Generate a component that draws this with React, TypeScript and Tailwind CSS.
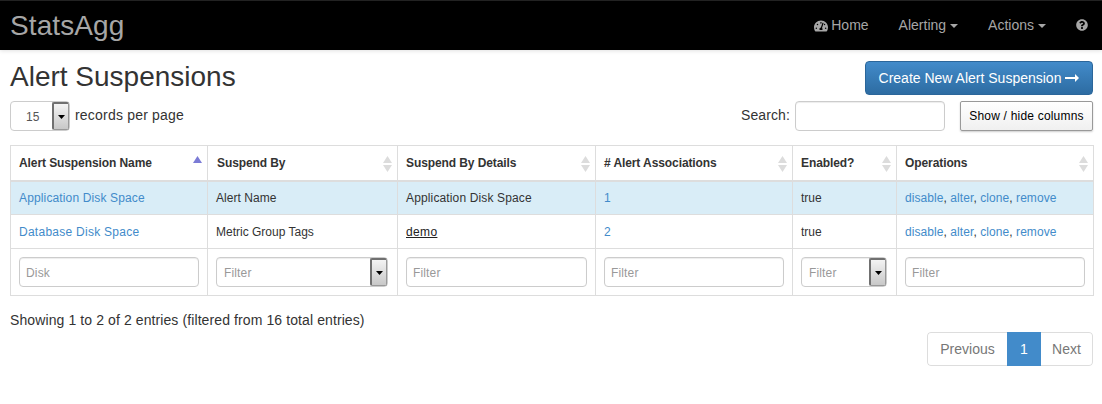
import React from "react";
import { FaTachometerAlt, FaQuestionCircle } from "react-icons/fa";

const FONT = "font-['Liberation_Sans',Arial,sans-serif]";

function Arrow() {
  return (
    <span className="flex h-full w-[17px] shrink-0 items-center justify-center rounded-[2px] border border-l-2 border-t-2 border-[#707070] border-b-[#999] border-r-[#999] bg-gradient-to-b from-[#f4f4f4] to-[#c8c8c8]">
      <svg width="7" height="4" viewBox="0 0 7 4"><path d="M0 0h7L3.5 4z" fill="#000" /></svg>
    </span>
  );
}

function Sort({ active = false }: { active?: boolean }) {
  if (active) {
    return (
      <svg className="absolute right-[5px] top-[10px]" width="9" height="7" viewBox="0 0 9 7">
        <path d="M4.5 0L9 7H0z" fill="#7b7bd6" />
      </svg>
    );
  }
  return (
    <svg className="absolute right-[5px] top-[10px]" width="9" height="16" viewBox="0 0 9 16">
      <path d="M4.5 0L9 7H0z" fill="#dcdcdc" />
      <path d="M0 9h9l-4.5 7z" fill="#dcdcdc" />
    </svg>
  );
}

function TextFilter({ value, w }: { value: string; w: string }) {
  return (
    <div className={`flex h-[30px] ${w} items-center rounded-[4px] border border-[#ccc] bg-white px-[6px] pt-[1px] text-[12px] tracking-[0.15px] text-[#999] shadow-[inset_0_1px_1px_rgba(0,0,0,0.075)]`}>
      {value}
    </div>
  );
}

function SelectFilter({ w }: { w: string }) {
  return (
    <div className={`flex h-[30px] ${w} items-center justify-between rounded-[4px] border border-[#ccc] bg-white pl-[7px] text-[12px] tracking-[0.15px] text-[#999] shadow-[inset_0_1px_1px_rgba(0,0,0,0.075)]`}>
      <span className="pt-[1px]">Filter</span>
      <Arrow />
    </div>
  );
}

const L = ({ children }: { children: React.ReactNode }) => <a className="text-[#428bca]">{children}</a>;

function Ops() {
  return (
    <span className="tracking-[0.07px]">
      <L>disable</L>, <L>alter</L>, <L>clone</L>, <L>remove</L>
    </span>
  );
}

const headers = ["Alert Suspension Name", "Suspend By", "Suspend By Details", "# Alert Associations", "Enabled?", "Operations"];
const widths = ["w-[197px]", "w-[190px]", "w-[198px]", "w-[197px]", "w-[104px]", "w-[197px]"];
const th = "relative h-[35px] border border-b-2 border-[#ddd] pl-[8px] text-left align-middle font-bold tracking-[-0.09px]";
const td = "h-[34px] border border-[#ddd] pl-[8px] align-middle";
const tf = "h-[47px] border border-[#ddd] pl-[8px] align-middle";

export default function App() {
  return (
    <div className={`${FONT} relative h-[404px] w-[1102px] overflow-hidden bg-white text-[14px] text-[#333]`}>
      <nav className="flex h-[50px] items-center justify-between border-t border-[#222] bg-black pl-[10px] pr-[14px] shadow-[0_1px_4px_rgba(0,0,0,0.12)]">
        <span className="text-[28px] leading-[48px] tracking-[0.1px] text-[#a6a6a6]">StatsAgg</span>
        <div className="flex items-center text-[14px] text-[#a6a6a6]">
          <span className="flex items-center gap-[3px]">
            <FaTachometerAlt className="text-[14px]" />
            Home
          </span>
          <span className="ml-[30px] flex items-center gap-[4px]">
            Alerting
            <svg width="8" height="4" viewBox="0 0 8 4"><path d="M0 0h8L4 4z" fill="#a6a6a6" /></svg>
          </span>
          <span className="ml-[30px] flex items-center gap-[4px]">
            Actions
            <svg width="8" height="4" viewBox="0 0 8 4"><path d="M0 0h8L4 4z" fill="#a6a6a6" /></svg>
          </span>
          <FaQuestionCircle className="mb-[2px] ml-[30px] text-[12px]" />
        </div>
      </nav>

      <main className="pl-[10px] pr-[9px]">
        <div className="flex h-[51px] items-start justify-between">
          <h1 className="mt-[10px] text-[28px] font-normal leading-[34px]">Alert Suspensions</h1>
          <button className="mt-[11px] flex h-[34px] w-[228px] items-center justify-center rounded-[4px] border border-[#2b669a] bg-gradient-to-b from-[#428bca] to-[#2d6ca2] text-[14px] text-white">
            Create New Alert Suspension
            <svg className="ml-[4px]" width="14" height="8" viewBox="0 0 14 8"><path d="M0 3h10V0l4 4-4 4V5H0z" fill="#fff" /></svg>
          </button>
        </div>

        <div className="flex h-[44px] items-start justify-between">
          <div className="flex items-center">
            <div className="flex h-[30px] w-[60px] items-center justify-between rounded-[4px] border border-[#ccc] bg-white pl-[15px] text-[12px] text-[#555]">
              <span className="pt-[1px]">15</span>
              <Arrow />
            </div>
            <span className="ml-[5px] pb-[2px] tracking-[0.2px]">records per page</span>
          </div>
          <div className="flex items-center">
            <span className="pb-[2px] tracking-[0.1px]">Search:</span>
            <div className="ml-[5px] h-[30px] w-[150px] rounded-[4px] border border-[#ccc] bg-white shadow-[inset_0_1px_1px_rgba(0,0,0,0.075)]" />
            <button className="ml-[15px] flex h-[30px] w-[133px] items-center justify-center rounded-[2px] border border-[#999] bg-gradient-to-b from-white to-[#f0f0f0] text-[12px] tracking-[0.2px] text-black shadow-[0_1px_2px_rgba(0,0,0,0.2)]">
              Show / hide columns
            </button>
          </div>
        </div>

        <table className="w-[1084px] table-fixed border-collapse text-[12px]">
          <colgroup>
            {widths.map((w, i) => <col key={i} className={w} />)}
          </colgroup>
          <thead>
            <tr>
              {headers.map((h, i) => (
                <th key={h} className={i === 1 ? `${th} !pl-[9px]` : th}>
                  {h}
                  <Sort active={i === 0} />
                </th>
              ))}
            </tr>
          </thead>
          <tbody>
            <tr className="bg-[#d9edf7]">
              <td className={td}><span className="tracking-[0.14px]"><L>Application Disk Space</L></span></td>
              <td className={td}><span className="tracking-[0.05px]">Alert Name</span></td>
              <td className={td}><span className="tracking-[0.14px]">Application Disk Space</span></td>
              <td className={td}><L>1</L></td>
              <td className={td}>true</td>
              <td className={td}><Ops /></td>
            </tr>
            <tr>
              <td className={td}><span className="tracking-[0.26px]"><L>Database Disk Space</L></span></td>
              <td className={td}>Metric Group Tags</td>
              <td className={td}><span className="tracking-[0.35px] text-[#222] underline">demo</span></td>
              <td className={td}><L>2</L></td>
              <td className={td}>true</td>
              <td className={td}><Ops /></td>
            </tr>
            <tr>
              <td className={tf}><TextFilter value="Disk" w="w-[180px]" /></td>
              <td className={tf}><SelectFilter w="w-[172px]" /></td>
              <td className={tf}><TextFilter value="Filter" w="w-[181px]" /></td>
              <td className={tf}><TextFilter value="Filter" w="w-[180px]" /></td>
              <td className={tf}><SelectFilter w="w-[86px]" /></td>
              <td className={tf}><TextFilter value="Filter" w="w-[180px]" /></td>
            </tr>
          </tbody>
        </table>

        <div className="mt-[14px] text-[14px] leading-[20px] tracking-[0.1px]">Showing 1 to 2 of 2 entries (filtered from 16 total entries)</div>

        <div className="mt-[2px] flex justify-end">
          <div className="flex h-[34px] overflow-hidden rounded-[4px] text-[14px]">
            <span className="flex w-[80px] items-center justify-center rounded-l-[4px] border border-r-0 border-[#ddd] text-[#777]">Previous</span>
            <span className="flex w-[34px] items-center justify-center bg-[#428bca] text-white">1</span>
            <span className="flex w-[52px] items-center justify-center rounded-r-[4px] border border-l-0 border-[#ddd] text-[#777]">Next</span>
          </div>
        </div>
      </main>
    </div>
  );
}
